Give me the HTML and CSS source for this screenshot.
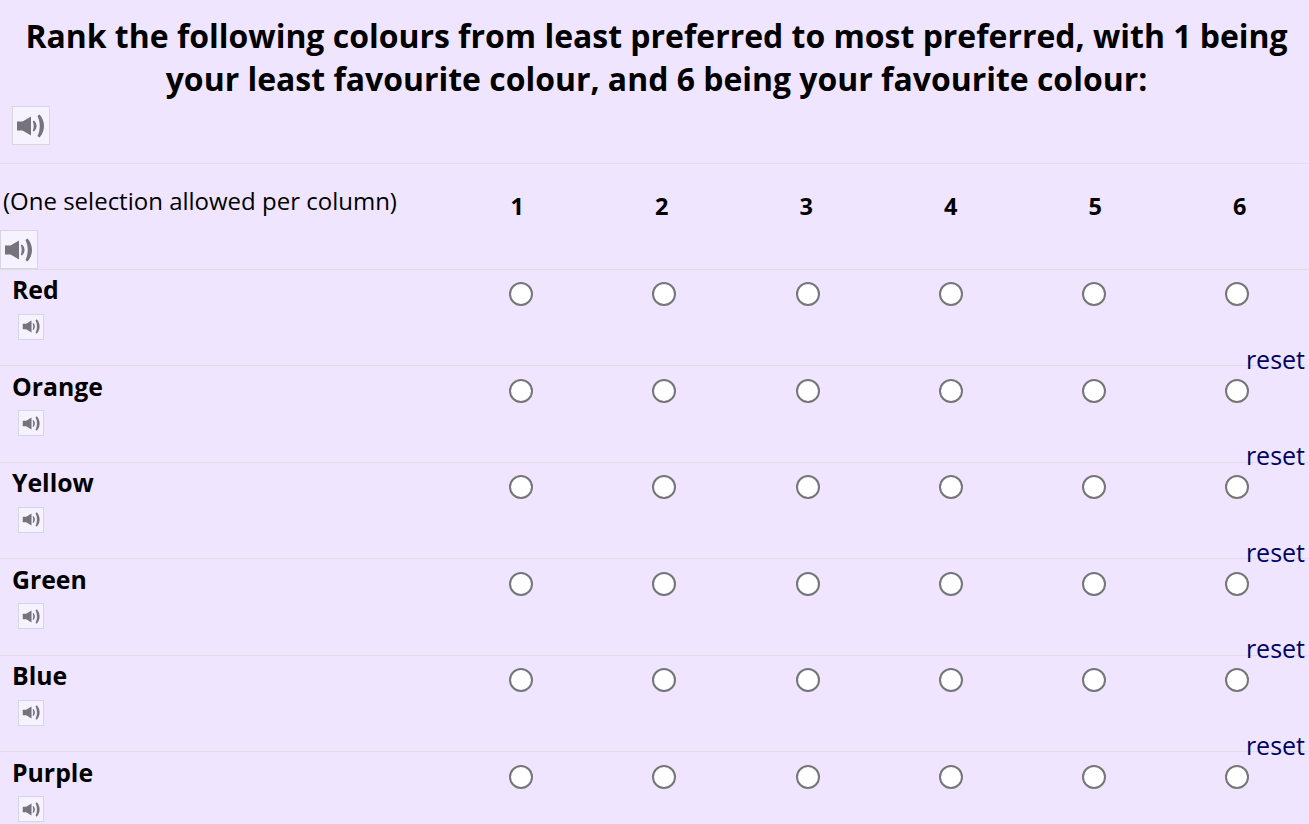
FILE: index.html
```html
<!DOCTYPE html>
<html lang="en">
<head>
<meta charset="utf-8">
<title>Rank colours</title>
<link rel="stylesheet" href="styles.css">
</head>
<body>
<svg class="defs" width="0" height="0" aria-hidden="true"><defs>
<symbol id="spk" viewBox="0 0 30 24">
<path d="M1 7.500h5.500L15 2.500v19l-8.500-5H1z" fill="#77737c"/>
<path d="M18 6.500c3.400 3.200 3.400 7.800 0 11l-1.200-.8c1.200-3.200 1.200-6.200 0-9.400z" fill="#77737c"/>
<path d="M23.500 .5c6 6.500 6 16.500 0 23l-2-1.400c3-6.400 3-13.800 0-20.200z" fill="#77737c"/>
</symbol></defs></svg>
<main class="page">
<h1 class="title">Rank the following colours from least preferred to most preferred, with 1 being your least favourite colour, and 6 being your favourite colour:</h1>
<div class="title-audio"><button class="audio"><svg><use href="#spk"/></svg></button></div>
<div class="head">
  <div class="head-label"><div class="hint">(One selection allowed per column)</div><button class="audio"><svg><use href="#spk"/></svg></button></div>
  <div class="num">1</div><div class="num">2</div><div class="num">3</div><div class="num">4</div><div class="num">5</div><div class="num">6</div>
</div>
<div class="row">
  <div class="name"><div>Red</div><button class="audio small"><svg><use href="#spk"/></svg></button></div>
  <input type="radio" name="r"><input type="radio" name="r"><input type="radio" name="r"><input type="radio" name="r"><input type="radio" name="r"><input type="radio" name="r">
  <a class="reset">reset</a>
</div>
<div class="row">
  <div class="name"><div>Orange</div><button class="audio small"><svg><use href="#spk"/></svg></button></div>
  <input type="radio" name="o"><input type="radio" name="o"><input type="radio" name="o"><input type="radio" name="o"><input type="radio" name="o"><input type="radio" name="o">
  <a class="reset">reset</a>
</div>
<div class="row">
  <div class="name"><div>Yellow</div><button class="audio small"><svg><use href="#spk"/></svg></button></div>
  <input type="radio" name="y"><input type="radio" name="y"><input type="radio" name="y"><input type="radio" name="y"><input type="radio" name="y"><input type="radio" name="y">
  <a class="reset">reset</a>
</div>
<div class="row">
  <div class="name"><div>Green</div><button class="audio small"><svg><use href="#spk"/></svg></button></div>
  <input type="radio" name="g"><input type="radio" name="g"><input type="radio" name="g"><input type="radio" name="g"><input type="radio" name="g"><input type="radio" name="g">
  <a class="reset">reset</a>
</div>
<div class="row">
  <div class="name"><div>Blue</div><button class="audio small"><svg><use href="#spk"/></svg></button></div>
  <input type="radio" name="b"><input type="radio" name="b"><input type="radio" name="b"><input type="radio" name="b"><input type="radio" name="b"><input type="radio" name="b">
  <a class="reset">reset</a>
</div>
<div class="row">
  <div class="name"><div>Purple</div><button class="audio small"><svg><use href="#spk"/></svg></button></div>
  <input type="radio" name="p"><input type="radio" name="p"><input type="radio" name="p"><input type="radio" name="p"><input type="radio" name="p"><input type="radio" name="p">
</div>
</main>
</body>
</html>
```
FILE: styles.css
```css
html, body { margin: 0; height: 100%; overflow: hidden; background: #f0e5ff; }
body { font-family: "Open Sans", sans-serif; color: #000; }
.defs { position: absolute; }
.page { width: 1309px; }
.title { margin: 0; padding: 14px 12px 0 16px; font-size: 31.95px; line-height: 43px; font-weight: 700; text-align: center; }
.title-audio { padding: 6px 12px 18px; height: 39px; border-bottom: 1px solid #e0dbe4; box-sizing: content-box; }
.audio { display: block; width: 38px; height: 39px; padding: 0; background: #f7f2ff; border: 1px solid #d9d5de; box-sizing: border-box; }
.audio svg { display: block; width: 30px; height: 24px; margin: 0 auto; filter: blur(0.4px); }
.audio.small { width: 26px; height: 26px; margin: 8.4px 0 0 6px; }
.audio.small svg { width: 19px; height: 15px; }
.head { display: grid; grid-template-columns: 445px repeat(6, 144.5px); height: 104.5px; border-bottom: 1px solid #e0dbe4; }
.head-label { font-size: 24px; line-height: 32px; }
.hint { padding: 21px 0 13px 3px; }
.num { font-size: 23.5px; font-weight: 700; line-height: 30px; padding-top: 27px; text-align: center; }
.row { position: relative; display: grid; grid-template-columns: 449.6px repeat(6, 143.2px); height: 95.5px; border-bottom: 1px solid #e0dbe4; align-items: start; justify-items: center; }
.row:last-child { border-bottom: 0; }
.name { justify-self: start; padding: 3.7px 0 0 12px; font-size: 24.8px; font-weight: 700; line-height: 32px; }
input[type="radio"] { appearance: none; width: 24px; height: 24px; margin: 12.5px 0 0; background: #fff; border: 2px solid #767676; border-radius: 50%; box-sizing: border-box; }
.reset { position: absolute; right: 4px; bottom: -9.7px; font-size: 25px; line-height: 32px; color: #000066; }
```
